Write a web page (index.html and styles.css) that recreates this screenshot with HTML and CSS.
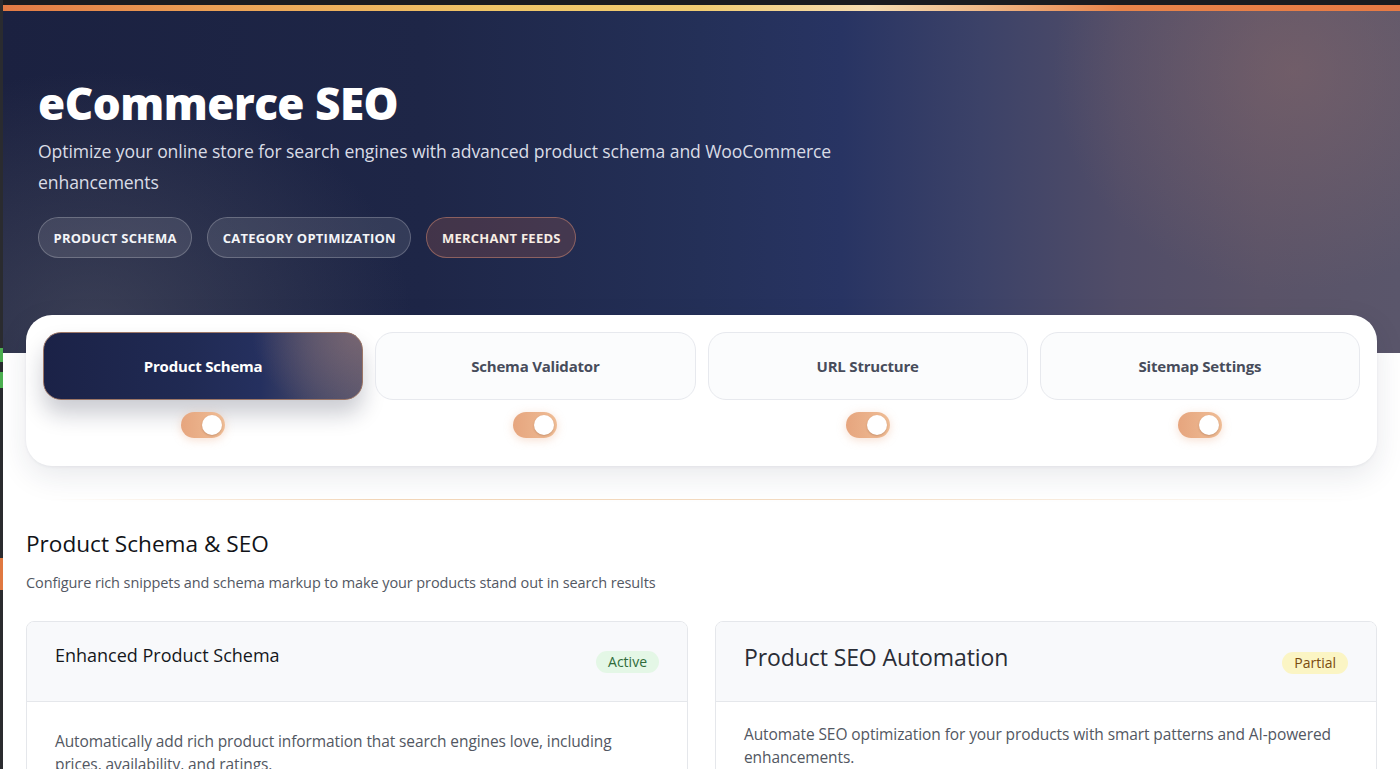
FILE: index.html
```html
<!DOCTYPE html>
<html lang="en">
<head>
<meta charset="utf-8">
<title>eCommerce SEO</title>
<link rel="stylesheet" href="styles.css">
</head>
<body>
<div class="page">
  <div class="rail"></div>
  <div class="main">
    <div class="topbar"></div>
    <div class="stripe"></div>
    <header class="hero">
      <h1 class="hero-title">eCommerce SEO</h1>
      <p class="hero-sub">Optimize your online store for search engines with advanced product schema and WooCommerce enhancements</p>
      <div class="pills">
        <span class="pill">Product Schema</span>
        <span class="pill">Category Optimization</span>
        <span class="pill pill-warm">Merchant Feeds</span>
      </div>
    </header>
    <div class="content">
      <nav class="tabs-card">
        <div class="tab-col">
          <div class="tab tab-active">Product Schema</div>
          <span class="toggle"><span class="knob"></span></span>
        </div>
        <div class="tab-col">
          <div class="tab">Schema Validator</div>
          <span class="toggle"><span class="knob"></span></span>
        </div>
        <div class="tab-col">
          <div class="tab">URL Structure</div>
          <span class="toggle"><span class="knob"></span></span>
        </div>
        <div class="tab-col">
          <div class="tab">Sitemap Settings</div>
          <span class="toggle"><span class="knob"></span></span>
        </div>
      </nav>
      <div class="divider"></div>
      <section class="section">
        <h2 class="section-title">Product Schema &amp; SEO</h2>
        <p class="section-desc">Configure rich snippets and schema markup to make your products stand out in search results</p>
        <div class="cards">
          <article class="card">
            <div class="card-head">
              <h3 class="card-title">Enhanced Product Schema</h3>
              <span class="badge badge-active">Active</span>
            </div>
            <div class="card-body">
              <p>Automatically add rich product information that search engines love, including prices, availability, and ratings.</p>
            </div>
          </article>
          <article class="card">
            <div class="card-head card-head-lg">
              <h3 class="card-title card-title-lg">Product SEO Automation</h3>
              <span class="badge badge-partial">Partial</span>
            </div>
            <div class="card-body card-body-lg">
              <p>Automate SEO optimization for your products with smart patterns and AI-powered enhancements.</p>
            </div>
          </article>
        </div>
      </section>
    </div>
  </div>
</div>
</body>
</html>
```

FILE: styles.css
```css
* { box-sizing: border-box; }
html, body { margin: 0; padding: 0; }
body {
  background: #ffffff;
  font-family: "Open Sans", "Noto Sans", sans-serif;
  color: #1d1f24;
  overflow: hidden;
}
.page {
  display: flex;
  min-height: 769px;
}
.rail {
  width: 3px;
  flex: 0 0 3px;
  background: linear-gradient(180deg,
    #2a2b2f 0px, #2a2b2f 348px,
    #4caf50 348px, #4caf50 362px,
    #2a2b2f 362px, #2a2b2f 372px,
    #4caf50 372px, #4caf50 388px,
    #2a2b2f 388px, #2a2b2f 558px,
    #e07840 558px, #e07840 590px,
    #2a2b2f 590px, #2a2b2f 100%);
}
.main {
  flex: 1;
  min-width: 0;
}
.topbar {
  height: 5px;
  background: #1b1c20;
}
.stripe {
  height: 6px;
  background: linear-gradient(90deg, #e27a45 0%, #eba055 15%, #efc567 35%, #f1cc72 50%, #f6dcb0 62%, #f0b988 70%, #e8844a 80%, #e77a44 100%);
}
.hero {
  height: 342px;
  padding: 64px 35px 0;
  background:
    radial-gradient(ellipse 240px 220px at 1290px 60px, rgba(140, 105, 105, 0.45), rgba(140, 105, 105, 0) 100%),
    radial-gradient(ellipse 320px 260px at 90px 320px, rgba(90, 92, 105, 0.5), rgba(90, 92, 105, 0) 100%),
    linear-gradient(90deg, #1b2140 0%, #1e2647 30%, #243058 50%, #283463 60%, #3c4268 70%, #514d68 80%, #5a5368 90%, #5a566b 100%);
}
.hero-title {
  margin: 0;
  font-size: 44px;
  line-height: 56px;
  font-weight: 800;
  color: #ffffff;
  letter-spacing: -0.5px;
}
.hero-sub {
  margin: 5px 0 0;
  max-width: 850px;
  font-size: 17.6px;
  line-height: 31px;
  letter-spacing: -0.1px;
  color: #d9dce6;
}
.pills {
  display: flex;
  gap: 15px;
  margin-top: 19px;
}
.pill {
  display: inline-flex;
  align-items: center;
  height: 41px;
  padding: 0 14.5px;
  border-radius: 21px;
  border: 1px solid rgba(255, 255, 255, 0.22);
  background: rgba(255, 255, 255, 0.1);
  color: #f4f5f8;
  font-size: 13px;
  font-weight: 700;
  text-transform: uppercase;
  letter-spacing: 0.25px;
}
.pill-warm {
  background: rgba(160, 90, 80, 0.28);
  border-color: rgba(230, 150, 120, 0.45);
  color: #f7ede4;
}
.content {
  padding: 0 23px;
}
.tabs-card {
  position: relative;
  margin-top: -38px;
  display: grid;
  grid-template-columns: repeat(4, 1fr);
  gap: 12px;
  padding: 17px 17px 28px;
  background: #ffffff;
  border-radius: 26px;
  box-shadow: 0 10px 30px rgba(30, 40, 70, 0.1), 0 1px 3px rgba(30, 40, 70, 0.06);
}
.tab-col {
  display: flex;
  flex-direction: column;
  align-items: center;
  gap: 12px;
}
.tab {
  width: 100%;
  height: 68px;
  display: flex;
  align-items: center;
  justify-content: center;
  border-radius: 18px;
  border: 1px solid #e7e9ee;
  background: #fbfcfd;
  color: #474c5b;
  font-size: 15px;
  font-weight: 700;
  letter-spacing: -0.2px;
}
.tab-active {
  border-color: #9c7666;
  color: #ffffff;
  background:
    radial-gradient(ellipse 110px 90px at 100% 0%, rgba(125, 105, 115, 0.85), rgba(125, 105, 115, 0) 100%),
    linear-gradient(90deg, #1b2247 0%, #202a53 45%, #25305f 68%, #434667 85%, #55536c 100%);
  box-shadow: 0 14px 22px rgba(20, 25, 50, 0.22);
}
.toggle {
  display: flex;
  align-items: center;
  justify-content: flex-end;
  width: 44px;
  height: 26px;
  padding: 3px;
  border-radius: 13px;
  background: linear-gradient(90deg, #e6a57e, #efbd96);
  box-shadow: 0 2px 10px rgba(232, 160, 120, 0.35);
}
.knob {
  width: 20px;
  height: 20px;
  border-radius: 50%;
  background: #ffffff;
  box-shadow: 0 1px 2px rgba(120, 70, 40, 0.3);
}
.divider {
  height: 1px;
  margin: 33px 24px 0;
  background: linear-gradient(90deg, rgba(240, 200, 160, 0) 0%, #f3d6b8 25%, #f4dcc2 60%, rgba(240, 220, 200, 0) 100%);
}
.section {
  padding-top: 28px;
}
.section-title {
  margin: 0;
  font-size: 22.6px;
  line-height: 32px;
  font-weight: 500;
  color: #111318;
}
.section-desc {
  margin: 12px 0 0;
  font-size: 14.5px;
  line-height: 22px;
  letter-spacing: -0.1px;
  color: #535863;
}
.cards {
  display: grid;
  grid-template-columns: 1fr 1fr;
  gap: 27px;
  margin-top: 27px;
}
.card {
  border: 1px solid #e5e7eb;
  border-radius: 8px;
  overflow: hidden;
  background: #ffffff;
}
.card-head {
  display: flex;
  justify-content: space-between;
  align-items: flex-start;
  height: 80px;
  padding: 19px 28px 0;
  background: #f8f9fb;
  border-bottom: 1px solid #e5e7eb;
}
.card-title {
  margin: 0;
  font-size: 18px;
  line-height: 28px;
  font-weight: 500;
  color: #15171c;
}
.card-title-lg {
  font-size: 23px;
  line-height: 32px;
  letter-spacing: -0.1px;
  color: #2a2d36;
}
.badge {
  margin-top: 10px;
  padding: 0 12px;
  height: 22px;
  line-height: 22px;
  border-radius: 11px;
  font-size: 14px;
  font-weight: 500;
}
.badge-active {
  background: #e4f7e6;
  color: #2f6b3a;
}
.badge-partial {
  margin-top: 11px;
  background: #fbf5c4;
  color: #7a4b10;
}
.card-body {
  padding: 28px 28px 20px;
}
.card-body-lg {
  padding-top: 21px;
}
.card-body p {
  margin: 0;
  font-size: 15.5px;
  line-height: 23px;
  letter-spacing: -0.1px;
  color: #525762;
}
```
